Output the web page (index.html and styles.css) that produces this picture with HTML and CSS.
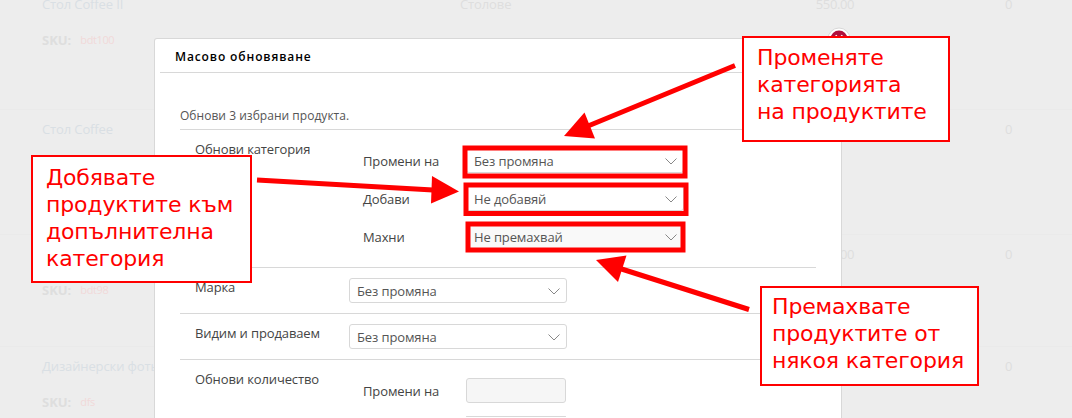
FILE: index.html
```
<!DOCTYPE html>
<html lang="bg">
<head>
    <meta charset="UTF-8">
    <meta name="viewport" content="width=device-width, initial-scale=1.0">
    <title>Масово обновяване</title>
    <link rel="stylesheet" href="styles.css">
</head>
<body>
<div class="products">
    <div class="product">
        <div class="info"><a class="name">Стол Coffee II</a><p class="sku"><b>SKU:</b><span>bdt100</span></p></div>
        <div class="category">Столове</div>
        <div class="price">550.00</div>
        <div class="count">0</div>
    </div>
    <div class="product">
        <div class="info"><a class="name">Стол Coffee</a></div>
        <div class="category"></div>
        <div class="price"></div>
        <div class="count">0</div>
    </div>
    <div class="product short">
        <div class="info"><a class="name"></a><p class="sku"><b>SKU:</b><span>bdt98</span></p></div>
        <div class="category"></div>
        <div class="price">550.00</div>
        <div class="count">0</div>
    </div>
    <div class="product last">
        <div class="info"><a class="name">Дизайнерски фотьойл</a><p class="sku"><b>SKU:</b><span>dfs</span></p></div>
        <div class="category"></div>
        <div class="price"></div>
        <div class="count">0</div>
    </div>
</div>

<div class="modal">
    <svg class="close" width="24" height="24" viewBox="0 0 24 24">
        <circle cx="12" cy="12" r="11" fill="#fff" stroke="#d8d8d8"/>
        <circle cx="12" cy="12" r="8.5" fill="#b0103c"/>
        <path d="M8.5 8.500l7 7M15.500 8.500l-7 7" stroke="#fff" stroke-width="2"/>
    </svg>
    <h2 class="title">Масово обновяване</h2>
    <div class="content">
        <p class="intro">Обнови 3 избрани продукта.</p>
        <div class="group category-group">
            <div class="label">Обнови категория</div>
            <div class="fields">
                <div class="field">
                    <span>Промени на</span>
                    <div class="select">Без промяна<svg width="12" height="7" viewBox="0 0 12 7"><path d="M.5 .5L6 6L11.500 .5"/></svg></div>
                </div>
                <div class="field">
                    <span>Добави</span>
                    <div class="select">Не добавяй<svg width="12" height="7" viewBox="0 0 12 7"><path d="M.5 .5L6 6L11.500 .5"/></svg></div>
                </div>
                <div class="field">
                    <span>Махни</span>
                    <div class="select active">Не премахвай<svg width="12" height="7" viewBox="0 0 12 7"><path d="M.5 .5L6 6L11.500 .5"/></svg></div>
                </div>
            </div>
        </div>
        <div class="group">
            <div class="label">Марка</div>
            <div class="select">Без промяна<svg width="12" height="7" viewBox="0 0 12 7"><path d="M.5 .5L6 6L11.500 .5"/></svg></div>
        </div>
        <div class="group">
            <div class="label">Видим и продаваем</div>
            <div class="select">Без промяна<svg width="12" height="7" viewBox="0 0 12 7"><path d="M.5 .5L6 6L11.500 .5"/></svg></div>
        </div>
        <div class="group count-group">
            <div class="label">Обнови количество</div>
            <div class="fields">
                <div class="field">
                    <span>Промени на</span>
                    <div class="input"></div>
                </div>
                <div class="field">
                    <div class="input second"></div>
                </div>
            </div>
        </div>
    </div>
</div>

<!-- frames and arrows over the category selects -->
<svg class="marks" width="1072" height="418" viewBox="0 0 1072 418">
    <g fill="none" stroke="#f00" stroke-width="5">
        <rect x="465" y="148" width="220" height="28"/>
        <rect x="466" y="185" width="220" height="28.500"/>
        <rect x="468" y="224" width="215" height="26"/>
        <path d="M735 65.500L588 126M257 180L433 190M749 309.500L620 268.500"/>
    </g>
    <g fill="#f00">
        <path d="M564 136L584.500 112.500L595 138.500z"/>
        <path d="M459 191.500L432 176L431 203.500z"/>
        <path d="M596 260L626.500 255.500L618 282z"/>
    </g>
</svg>
<div class="note note-change">Променяте<br>категорията<br>на продуктите</div>
<div class="note note-add">Добявате<br>продуктите към<br>допълнителна<br>категория</div>
<div class="note note-remove">Премахвате<br>продуктите от<br>някоя категория</div>
</body>
</html>
```
FILE: styles.css
```
* {
    box-sizing: border-box;
}
body {
    margin: 0;
    height: 418px;
    overflow: hidden;
    position: relative;
    background: #ededed;
    font: 13px/18px "Open Sans", "Noto Sans", sans-serif;
    letter-spacing: -.12px;
    color: #444;
}
p, h2 {
    margin: 0;
}
.products {
    margin-top: -16px;
    color: #dedede;
}
.product {
    display: grid;
    grid-template-columns: 418px 300px 136px 158px;
    height: 125px;
    padding: 10px 0 0 42px;
    border-top: 1px solid #eaeaea;
}
.product.short {
    height: 112px;
}
.product.last {
    height: 72px;
}
.name {
    display: block;
    height: 18px;
    color: #d9dfe4;
}
.sku {
    display: flex;
    gap: 9px;
    margin-top: 18px;
}
.sku b {
    letter-spacing: 0;
}
.sku span {
    font-size: 11px;
    letter-spacing: -.4px;
    color: #f1d9d9;
}
.price {
    text-align: right;
    padding-right: 42px;
    width: 136px;
    letter-spacing: -.4px;
}
.count {
    padding-left: 109px;
}
.modal {
    position: absolute;
    left: 154px;
    top: 38px;
    width: 688px;
    height: 380px;
    padding: 0 5px;
    background: #fff;
    border: 1px solid #d8d8d8;
    border-bottom: 0;
    border-radius: 3px 3px 0 0;
}
.close {
    position: absolute;
    right: -10px;
    top: -12px;
}
.title {
    height: 34px;
    padding-left: 15px;
    border-bottom: 1px solid #d8d8d8;
    font-size: 12px;
    line-height: 35px;
    font-weight: 600;
    letter-spacing: .88px;
    color: #000;
}
.content {
    padding: 34px 20px 0;
}
.intro {
    height: 22px;
    font-size: 12px;
    letter-spacing: .03px;
    color: #555;
}
.group {
    display: flex;
    height: 46px;
    padding: 10px 0 0 15px;
    border-top: 1px solid #d8d8d8;
}
.category-group {
    height: 138px;
}
.count-group {
    height: 58px;
}
.label {
    width: 154px;
}
.fields {
    display: flex;
    flex-direction: column;
    gap: 13px;
    padding: 8px 0 0 14px;
}
.field {
    display: flex;
    align-items: center;
    height: 25px;
}
.field span {
    width: 103px;
}
.select {
    display: flex;
    align-items: center;
    justify-content: space-between;
    width: 218px;
    height: 25px;
    padding: 1px 6px 0 7px;
    border: 1px solid #d8d8d8;
    border-radius: 3px;
    color: #555;
}
.select.active {
    background: #f9f9f9;
}
.select svg {
    fill: none;
    stroke: #888;
}
.input {
    width: 100px;
    height: 25px;
    background: #f6f6f6;
    border: 1px solid #d8d8d8;
    border-radius: 3px;
}
.input.second {
    height: 100%;
    margin-left: 103px;
}
.count-group .field:last-child {
    height: 2px;
}
.count-group .input.second {
    border-bottom: 0;
    border-radius: 3px 3px 0 0;
}
.marks {
    position: absolute;
    left: 0;
    top: 0;
}
.note {
    position: absolute;
    background: #fff;
    border: 2px solid #f00;
    color: #f00;
    font: 22px/27px "DejaVu Sans", sans-serif;
    letter-spacing: -.15px;
    white-space: nowrap;
}
.note-change {
    left: 742px;
    top: 36px;
    width: 208px;
    height: 106px;
    padding: 6px 13px;
}
.note-add {
    left: 31px;
    top: 155px;
    width: 221px;
    height: 128px;
    padding: 7px 13px;
}
.note-remove {
    left: 760px;
    top: 286px;
    width: 219px;
    height: 100px;
    padding: 5px 10px;
}
```
